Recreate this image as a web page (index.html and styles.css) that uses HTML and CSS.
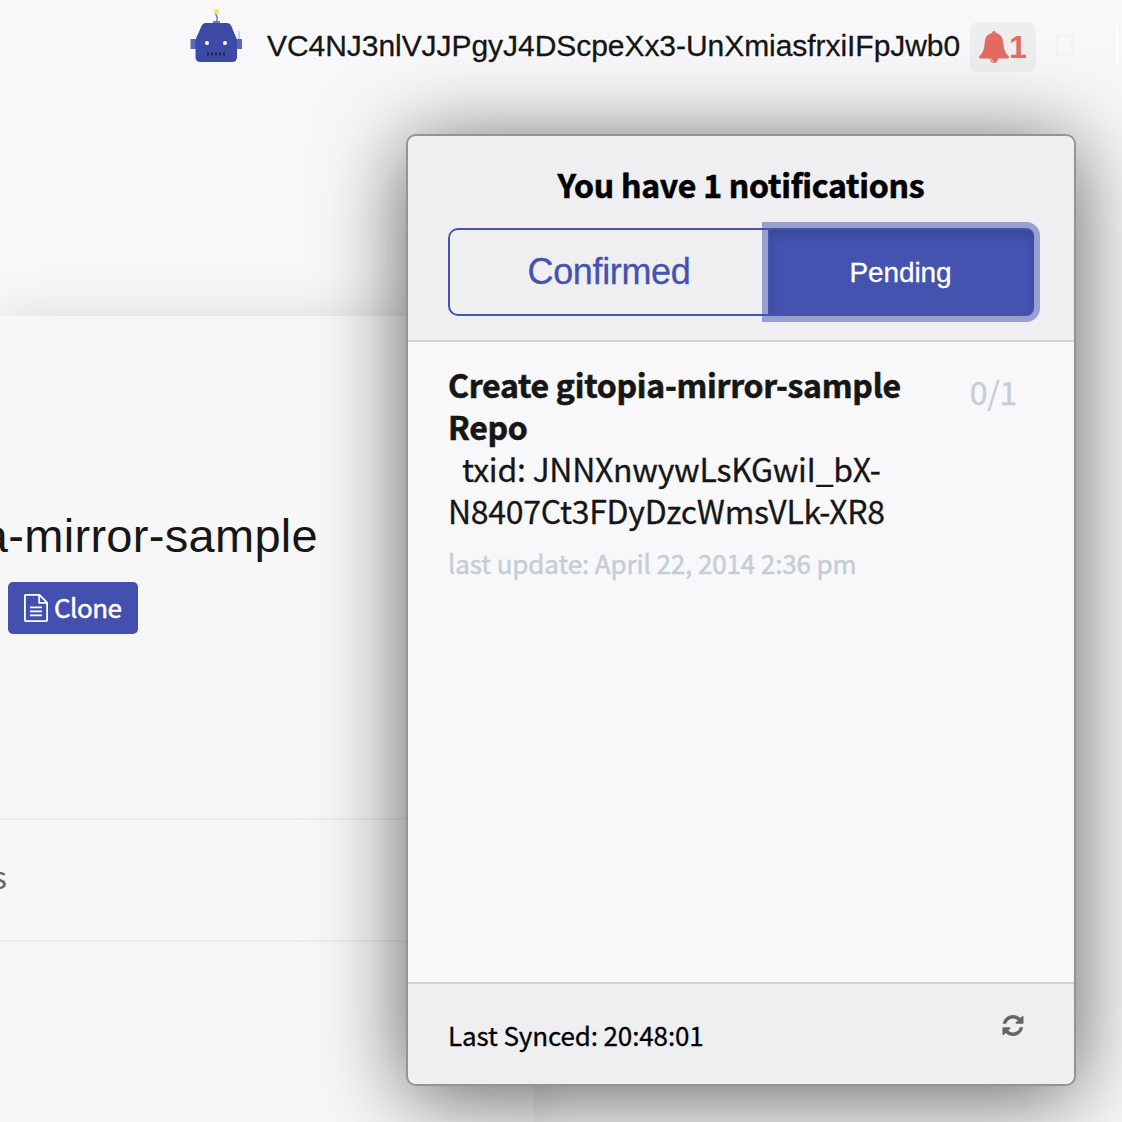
FILE: index.html
```html
<!DOCTYPE html>
<html lang="en">
<head>
<meta charset="utf-8">
<title>gitopia-mirror-sample</title>
<link rel="stylesheet" href="styles.css">
</head>
<body>
<div class="page">
  <header class="navbar">
    <svg class="avatar" viewBox="0 0 54 54" aria-hidden="true">
      <path d="M27 14c-1-2 1-3 0-5s-2-3-1-5" fill="none" stroke="#5966b5" stroke-width="1.3"/>
      <circle cx="26.500" cy="3.500" r="2.600" fill="#f7e36c"/>
      <path d="M49 23v10" stroke="#a5add9" stroke-width="1"/>
      <rect x="23" y="13" width="7" height="3" fill="#6f7ac0"/>
      <rect x="0.500" y="31" width="6" height="10" fill="#5b68b8"/>
      <rect x="46" y="31" width="6" height="10" fill="#5b68b8"/>
      <path d="M16 15h21q3 0 4.300 3l5 12q.7 2 .7 4v15q0 5-5 5H10.500q-5 0-5-5V34q0-2 .7-4l5.300-12q1.400-3 4.500-3z" fill="#3c4aa5"/>
      <circle cx="17" cy="35" r="2" fill="#fff"/><circle cx="35" cy="35" r="2" fill="#fff"/>
      <path d="M18 44.500v3M22 44.500v3M26 44.500v3M30 44.500v3M34 44.500v3" stroke="#161c4a" stroke-width="1.600"/>
    </svg>
    <span class="address">VC4NJ3nlVJJPgyJ4DScpeXx3-UnXmiasfrxiIFpJwb0</span>
    <button class="bell">
      <svg viewBox="0 0 30 32" aria-hidden="true"><path d="M15 0c1.200 0 1.800.8 1.800 2 5 .9 7.200 4.800 7.500 9.500.4 7 1.800 10 5.200 13.500.8.900.2 2.500-1 2.500H19c0 2.600-1.800 4.500-4 4.500s-4-1.900-4-4.500H1.500c-1.200 0-1.800-1.600-1-2.500 3.400-3.500 4.800-6.500 5.200-13.500.3-4.700 2.500-8.600 7.500-9.500 0-1.200.6-2 1.800-2z" fill="#e36b62"/><path d="M12.200 27.600c0 1.700 1.200 2.900 2.800 2.900" fill="none" stroke="#f5d5d2" stroke-width="1"/></svg>
      <span>1</span>
    </button>
    <span class="blank-glyph"></span>
    <span class="divider"></span>
  </header>

  <main class="repo">
    <div class="repo-head">
      <h1>a-mirror-sample</h1>
      <button class="clone">
        <svg viewBox="0 0 24 28" fill="none" stroke="#fff" stroke-width="1.800" aria-hidden="true"><path d="M1.800.9H15.500L23.100 8.500V26.200q0 .9-.9.900H1.800q-.9 0-.9-.9V1.800q0-.9.900-.9zM15.200 1v7.800H23M6 13.300h12M6 17.300h12M6 21.300h12"/></svg>
        <span>Clone</span>
      </button>
    </div>
    <div class="repo-tabs"><span>s</span></div>
  </main>

  <aside class="notifications">
    <header class="panel-head">
      <h2><span>You have 1 notifications</span></h2>
      <div class="tabs">
        <button class="tab confirmed">Confirmed</button>
        <button class="tab pending">Pending</button>
      </div>
    </header>
    <section class="panel-body">
      <div class="item">
        <div class="item-title">Create gitopia-mirror-sample<br>Repo</div>
        <div class="item-tx"><span class="tx-label">txid: JNNXnwywLsKGwiI_bX-</span><br>N8407Ct3FDyDzcWmsVLk-XR8</div>
        <div class="item-date">last update: April 22, 2014 2:36 pm</div>
      </div>
      <span class="count">0/1</span>
    </section>
    <footer class="panel-foot">
      <span class="synced">Last Synced: 20:48:01</span>
      <svg class="refresh" viewBox="0 0 1536 1536" aria-hidden="true"><path fill="#656565" d="M1511 928q0 5-1 7-64 268-268 434.500T764 1536q-146 0-282.500-55T238 1324l-129 129q-19 19-45 19t-45-19-19-45V960q0-26 19-45t45-19h448q26 0 45 19t19 45-19 45l-137 137q71 66 161 102t187 36q134 0 250-65t186-179q11-17 53-117 8-23 30-23h192q13 0 22.500 9.500t9.500 22.500zm25-800v448q0 26-19 45t-45 19h-448q-26 0-45-19t-19-45 19-45l138-138Q969 256 768 256q-134 0-250 65T332 500q-11 17-53 117-8 23-30 23H50q-13 0-22.500-9.500T18 608v-7q65-268 270-434.500T768 0q146 0 284 55.500T1297 212l130-129q19-19 45-19t45 19 19 45z"/></svg>
    </footer>
  </aside>
</div>
</body>
</html>
```
FILE: styles.css
```css
* { box-sizing: border-box; }
body { margin: 0; font-family: "Noto Sans CJK JP", sans-serif; color: #161616; }
button { margin: 0; padding: 0; border: 0; font: inherit; }
h1, h2 { margin: 0; }
.page { position: relative; width: 1122px; height: 1122px; overflow: hidden; background: #f8f8fb; }
.navbar { display: flex; align-items: flex-start; height: 316px; padding-left: 190px; }
.avatar { width: 54px; height: 54px; margin: 8px 23px 0 0; flex: none; }
.address { width: 703px; font: 30px/34px "Liberation Sans", sans-serif; letter-spacing: -.05px; margin-top: 29px; white-space: nowrap; -webkit-text-stroke: .3px; }
.bell { display: flex; align-items: center; gap: 0; width: 66px; height: 50px; margin-top: 22px; padding-left: 9px; border-radius: 8px; background: #eeeeef; color: #e36b62; font: bold 32px/50px "Liberation Sans", sans-serif; flex: none; }
.bell svg { width: 30px; height: 32px; margin-top: -1px; flex: none; }
.blank-glyph { width: 18px; height: 23px; margin: 34px 0 0 20px; border: 3px solid #f3f3f3; flex: none; }
.divider { width: 2px; height: 40px; margin: 26px 0 0 42px; background: #fff; flex: none; }

.repo { width: 534px; height: 806px; background: #f7f7f7; box-shadow: 0 0 50px rgba(0, 0, 0, .12); }
.repo-head { height: 502px; padding: 190px 0 0; }
.repo h1 { display: flex; justify-content: flex-end; width: 318px; height: 60px; overflow: hidden; font: 47px/59px "Liberation Sans", sans-serif; letter-spacing: .3px; white-space: nowrap; }
.clone { display: flex; align-items: center; gap: 6px; width: 130px; height: 52px; margin: 16px 0 0 8px; padding-left: 16px; border-radius: 5px; background: #4450af; color: #fff; font-size: 26px; letter-spacing: -.5px; -webkit-text-stroke: .5px; line-height: 50px; }
.clone svg { width: 24px; height: 28px; flex: none; }
.clone span { margin-top: -2px; }
.repo-tabs { height: 124px; padding-top: 31px; border: solid #ebebeb; border-width: 2px 0; color: #666; font-size: 32px; line-height: 48px; }
.repo-tabs span { margin-left: -8px; }

.notifications { position: absolute; left: 406px; top: 134px; width: 670px; height: 952px; display: flex; flex-direction: column; border: 2px solid #949494; border-radius: 10px; background: #f8f8fb; box-shadow: 0 10px 86px rgba(0, 0, 0, .62); white-space: nowrap; }
.panel-head { height: 206px; padding: 27px 40px 0; border-bottom: 2px solid #d3d3d5; border-radius: 12px 12px 0 0; background: #efeff1; }
.panel-head h2 { height: 42px; margin-bottom: 23px; font-size: 32px; line-height: 42px; letter-spacing: -.25px; -webkit-text-stroke: .6px; color: #000; text-align: center; }
.tabs { display: flex; height: 88px; }
.tab { width: 320px; border: 2px solid #4452b0; border-right: 0; border-radius: 10px 0 0 10px; background: transparent; color: #4452b0; font: 36px/84px "Liberation Sans", sans-serif; letter-spacing: -.35px; -webkit-text-stroke: .3px; }
.pending { width: 266px; padding: 1px 3px 0 0; border-radius: 0 8px 8px 0; background: #4452b0; color: #fff; font-size: 28px; letter-spacing: -.1px; box-shadow: inset 0 6px 10px rgba(0, 0, 0, .125), 0 0 0 6px rgba(68, 79, 174, .5); }
.panel-body { display: flex; justify-content: space-between; flex: 1; padding: 21px 57px 0 40px; }
.item-title { font-size: 32px; font-weight: 700; line-height: 42px; letter-spacing: -.27px; -webkit-text-stroke: .6px; }
.item-tx { font-size: 32px; line-height: 42px; letter-spacing: -.28px; -webkit-text-stroke: .3px; }
.tx-label { margin-left: 14px; }
.item-date { margin-top: 12px; font-size: 26px; line-height: 40px; letter-spacing: -.12px; -webkit-text-stroke: .5px; color: #c5ced5; }
.count { margin-top: 6px; font-size: 32px; line-height: 44px; letter-spacing: -.3px; -webkit-text-stroke: .3px; color: #c5ced5; }
.panel-foot { display: flex; justify-content: space-between; height: 102px; padding: 0 50px 0 40px; border-top: 2px solid #d3d3d5; border-radius: 0 0 12px 12px; background: #efeff1; color: #000; }
.synced { margin-top: 31px; font-size: 26px; line-height: 40px; letter-spacing: -.12px; -webkit-text-stroke: .3px; }
.refresh { width: 22px; height: 21px; margin-top: 31px; }
```
